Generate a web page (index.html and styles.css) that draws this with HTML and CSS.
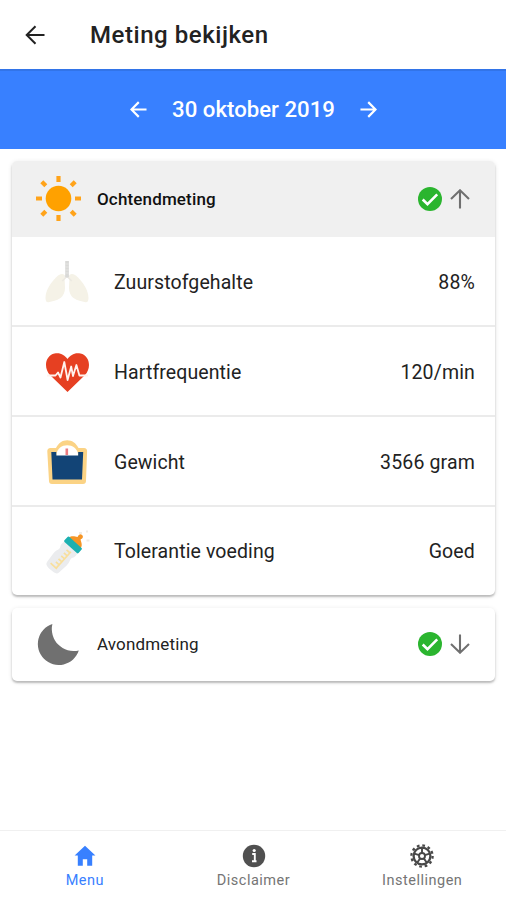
FILE: index.html
```html
<!DOCTYPE html>
<html lang="nl">
<head>
<meta charset="utf-8">
<title>Meting bekijken</title>
<link rel="stylesheet" href="styles.css">
</head>
<body>
<header class="topbar">
  <svg class="back" viewBox="0 0 20 20"><path d="M19.500 10H2M10.500 1.200L1.700 10l8.800 8.800" fill="none" stroke="currentColor" stroke-width="2"/></svg>
  <h1>Meting bekijken</h1>
</header>
<nav class="datebar">
  <svg class="date-arrow" viewBox="0 0 18 18"><path d="M17.500 9H2M9.300 1.200L1.500 9l7.800 7.800" fill="none" stroke="currentColor" stroke-width="2.300"/></svg>
  <span class="date">30 oktober 2019</span>
  <svg class="date-arrow" viewBox="0 0 18 18"><path d="M.5 9H16M8.700 1.200L16.500 9l-7.800 7.800" fill="none" stroke="currentColor" stroke-width="2.300"/></svg>
</nav>
<main>
  <section class="card">
    <div class="card-head open">
      <svg class="phase" viewBox="0 0 46 46">
        <circle cx="22.500" cy="22.500" r="12.800" fill="#ffa100"/>
        <path d="M22.500 0v6M22.500 39v6M0 22.500h6M39 22.500h6M5.800 5.800l4 4M35.200 35.200l4 4M39.200 5.800l-4 4M9.800 35.200l-4 4" stroke="#ffa31a" stroke-width="4.200"/>
      </svg>
      <span class="name morning">Ochtendmeting</span>
      <svg class="check" viewBox="0 0 24 24"><circle cx="12" cy="12" r="12" fill="#2bb52f"/><path d="M4.700 12.500l4.800 4.700L19.200 7.300" fill="none" stroke="#fff" stroke-width="2.600"/></svg>
      <svg class="fold" viewBox="0 0 20 20"><path d="M10 19.500V2M1 10l9-8.700 9 8.700" fill="none" stroke="#707070" stroke-width="2.100"/></svg>
    </div>
    <div class="row">
      <svg class="pic" viewBox="0 0 46 46">
        <path d="M20.500 15c-2.200-2-5.500-.8-9 3C6 23.500 1.500 31 1.500 38c0 3 1 4.500 3 4.200 4-1 8-1.400 12-4.200 2.800-2 4.500-6 4.500-10zM25.500 15c2.200-2 5.500-.8 9 3C40 23.500 44.500 31 44.500 38c0 3-1 4.500-3 4.200-4-1-8-1.400-12-4.200-2.800-2-4.500-6-4.500-10z" fill="#f5f2e7"/>
        <path d="M18.300 21l3-3v-2h3.400v2l3 3" fill="none" stroke="#ece9e2" stroke-width="1.600"/>
        <path d="M21.200 1h3.700v16l-1.900 1-1.800-1z" fill="#d9d9d7"/>
        <path d="M21.200 4h3.700M21.200 7h3.700M21.200 10h3.700M21.200 13h3.700" stroke="#e8e8e6" stroke-width=".8"/>
      </svg>
      <span class="label">Zuurstofgehalte</span><span class="value">88%</span>
    </div>
    <div class="row">
      <svg class="pic" viewBox="0 0 46 46">
        <path d="M23.500 42L6.200 25.300C-1 17.500 1.500 5.500 10.500 3.500c6-1.200 10 1.500 13 5.500 3-4 7-6.700 13-5.500 9 2 11.500 14 4.300 21.800z" fill="#e64022"/>
        <path d="M3 25.500h8.500l2.500-3 2.500 5L20.300 12l3.300 18 3.600-13.500L29 26l3.400-11 3 10.500H44" fill="none" stroke="#fff3ee" stroke-width="1.800" stroke-linejoin="round"/>
      </svg>
      <span class="label">Hartfrequentie</span><span class="value">120/min</span>
    </div>
    <div class="row">
      <svg class="pic" viewBox="0 0 46 46">
        <path d="M6.500 8H12C14.500 3 18.500.3 23.200.3S32 3 34.500 8H40c2.200 0 3.200 1.200 3.100 3.500L42 41c-.1 2-1 3-3 3H8c-2 0-2.900-1-3-3L3.300 11.500C3.200 9.200 4.300 8 6.500 8z" fill="#fbd385"/>
        <path d="M12.500 16v-2.500C13.500 8.500 17.800 5.200 23.200 5.200S33 8.500 34 13.500V16z" fill="#fff"/>
        <path d="M7.300 12h5v3.500h21.900V12h5L38 39.500H8.500z" fill="#124476"/>
        <path d="M22.800 8.500V15" stroke="#ec7c81" stroke-width="2.600"/>
      </svg>
      <span class="label">Gewicht</span><span class="value">3566 gram</span>
    </div>
    <div class="row">
      <svg class="pic" viewBox="0 0 46 46">
        <g transform="translate(20 26) rotate(42)">
          <path d="M-8.500-11h17c1 3 1.300 5-.5 8-1 2.500 1.500 4 1 9L8 16c-.3 3-2 4-8 4s-7.700-1-8-4L-9 6c-.5-5 2-6.500 1-9-1.800-3-1.500-5-.5-8z" fill="#ebecee"/>
          <path d="M3-7v22M-1.500-5.500H3M-1.500-1.500H3M-1.500 2.500H3M-1.500 6.500H3M-1.500 10.500H3M-4.500 15H4" fill="none" stroke="#f8df9d" stroke-width="1.700"/>
          <path d="M-8-16C-7.500-20-4-21-2-22.500c-1-3 0-4.500 2-4.500s3 1.500 2 4.500C4-21 7.500-20 8-16z" fill="#f59525"/>
          <rect x="-9.500" y="-17" width="19" height="7" rx="1.200" fill="#1bb0b1"/>
        </g>
        <path d="M35 4h3M42 2.500h2M42.500 11.500h3" stroke="#f0ece5" stroke-width="2"/>
      </svg>
      <span class="label">Tolerantie voeding</span><span class="value">Goed</span>
    </div>
  </section>
  <section class="card">
    <div class="card-head">
      <svg class="phase" viewBox="0 0 46 46"><path d="M16.400 3A21 21 0 1 0 42.800 29.500 22 22 0 0 1 16.400 3z" fill="#707070"/></svg>
      <span class="name">Avondmeting</span>
      <svg class="check" viewBox="0 0 24 24"><circle cx="12" cy="12" r="12" fill="#2bb52f"/><path d="M4.700 12.500l4.800 4.700L19.200 7.300" fill="none" stroke="#fff" stroke-width="2.600"/></svg>
      <svg class="fold" viewBox="0 0 20 20"><path d="M10 .5V18M1 10l9 8.700 9-8.700" fill="none" stroke="#707070" stroke-width="2.100"/></svg>
    </div>
  </section>
</main>
<footer class="tabs">
  <div class="tab active">
    <svg viewBox="0 0 24 24"><path d="M12 1.700L1.600 11.500h3.200v10.200h5v-6.500h4.400v6.500h5V11.500h3.200z" fill="currentColor"/></svg>
    <span>Menu</span>
  </div>
  <div class="tab">
    <svg viewBox="0 0 24 24"><circle cx="12" cy="12" r="11.200" fill="#505050"/><path d="M10.200 10h2.600v7M10 17.200h4.500" fill="none" stroke="#fff" stroke-width="1.900"/><circle cx="12.200" cy="6.500" r="1.600" fill="#fff"/></svg>
    <span>Disclaimer</span>
  </div>
  <div class="tab">
    <svg viewBox="0 0 24 24"><g fill="none" stroke="#484848"><circle cx="12" cy="12" r="10.600" stroke-width="2.300" stroke-dasharray="2.700 2.850"/><circle cx="12" cy="12" r="8.400" stroke-width="2.300"/><circle cx="12" cy="12" r="3" stroke-width="1.900"/><path d="M12 9V4M14.850 11.070l4.760-1.540M13.760 14.430l2.940 4.040M10.240 14.430L7.300 18.470M9.150 11.070L4.390 9.530" stroke-width="1.900"/></g></svg>
    <span>Instellingen</span>
  </div>
</footer>
</body>
</html>
```
FILE: styles.css
```css
* { box-sizing: border-box; }
body {
  margin: 0;
  height: 900px;
  display: flex;
  flex-direction: column;
  overflow: hidden;
  background: #fff;
  color: #222;
  font-family: Roboto, "Liberation Sans", sans-serif;
}
svg { display: block; flex: none; }
.topbar {
  height: 69px;
  flex: none;
  display: flex;
  align-items: center;
  padding: 0 25px;
  gap: 45px;
}
.back { width: 20px; height: 20px; }
h1 { margin: 0; font-size: 24px; font-weight: 500; letter-spacing: .55px; line-height: 28px; }
.datebar {
  height: 80px;
  flex: none;
  display: flex;
  justify-content: center;
  align-items: center;
  gap: 25px;
  padding: 0 0 2px 1px;
  background: #3880ff;
  border-top: 2px solid #3274e8;
  color: #fff;
}
.date-arrow { width: 17px; height: 17px; }
.date { font-size: 22.200px; font-weight: 500; }
main {
  flex: 1;
  display: flex;
  flex-direction: column;
  gap: 13px;
  padding: 12px 11px 0 12px;
}
.card {
  border-radius: 5px;
  overflow: hidden;
  background: #fff;
  box-shadow: 0 2px 2px rgba(0,0,0,.22), 0 1px 5px rgba(0,0,0,.1);
}
.card-head {
  height: 73px;
  display: flex;
  align-items: center;
  padding: 0 25px 0 24px;
}
.card-head.open { height: 76px; background: #f0f0f0; }
.phase { width: 46px; height: 46px; margin-right: 15px; }
.name { flex: 1; font-size: 17px; letter-spacing: .15px; }
.name.morning { font-weight: 500; color: #111; }
.check { width: 24px; height: 24px; margin-right: 8px; }
.fold { width: 20px; height: 20px; }
.row {
  height: 90px;
  display: flex;
  align-items: center;
  padding: 3px 20px 0 32px;
  border-bottom: 2px solid #ebebeb;
  font-size: 19.500px;
}
.row:last-child { height: 88px; padding-top: 1px; border-bottom: 0; }
.pic { width: 46px; height: 46px; margin-right: 24px; }
.label { flex: 1; letter-spacing: .1px; }
.value { letter-spacing: .15px; }
.card + .card .card-head { padding-bottom: 2px; }
.tabs {
  height: 70px;
  flex: none;
  display: flex;
  border-top: 1px solid #f0f0f0;
}
.tab {
  flex: 1;
  display: flex;
  flex-direction: column;
  align-items: center;
  padding: 13px 0 0 1px;
  gap: 4px;
  color: #757575;
  font-size: 14.500px;
  line-height: 17px;
  letter-spacing: .5px;
}
.tab svg { width: 24px; height: 24px; }
.tab.active { color: #3880ff; }
```
